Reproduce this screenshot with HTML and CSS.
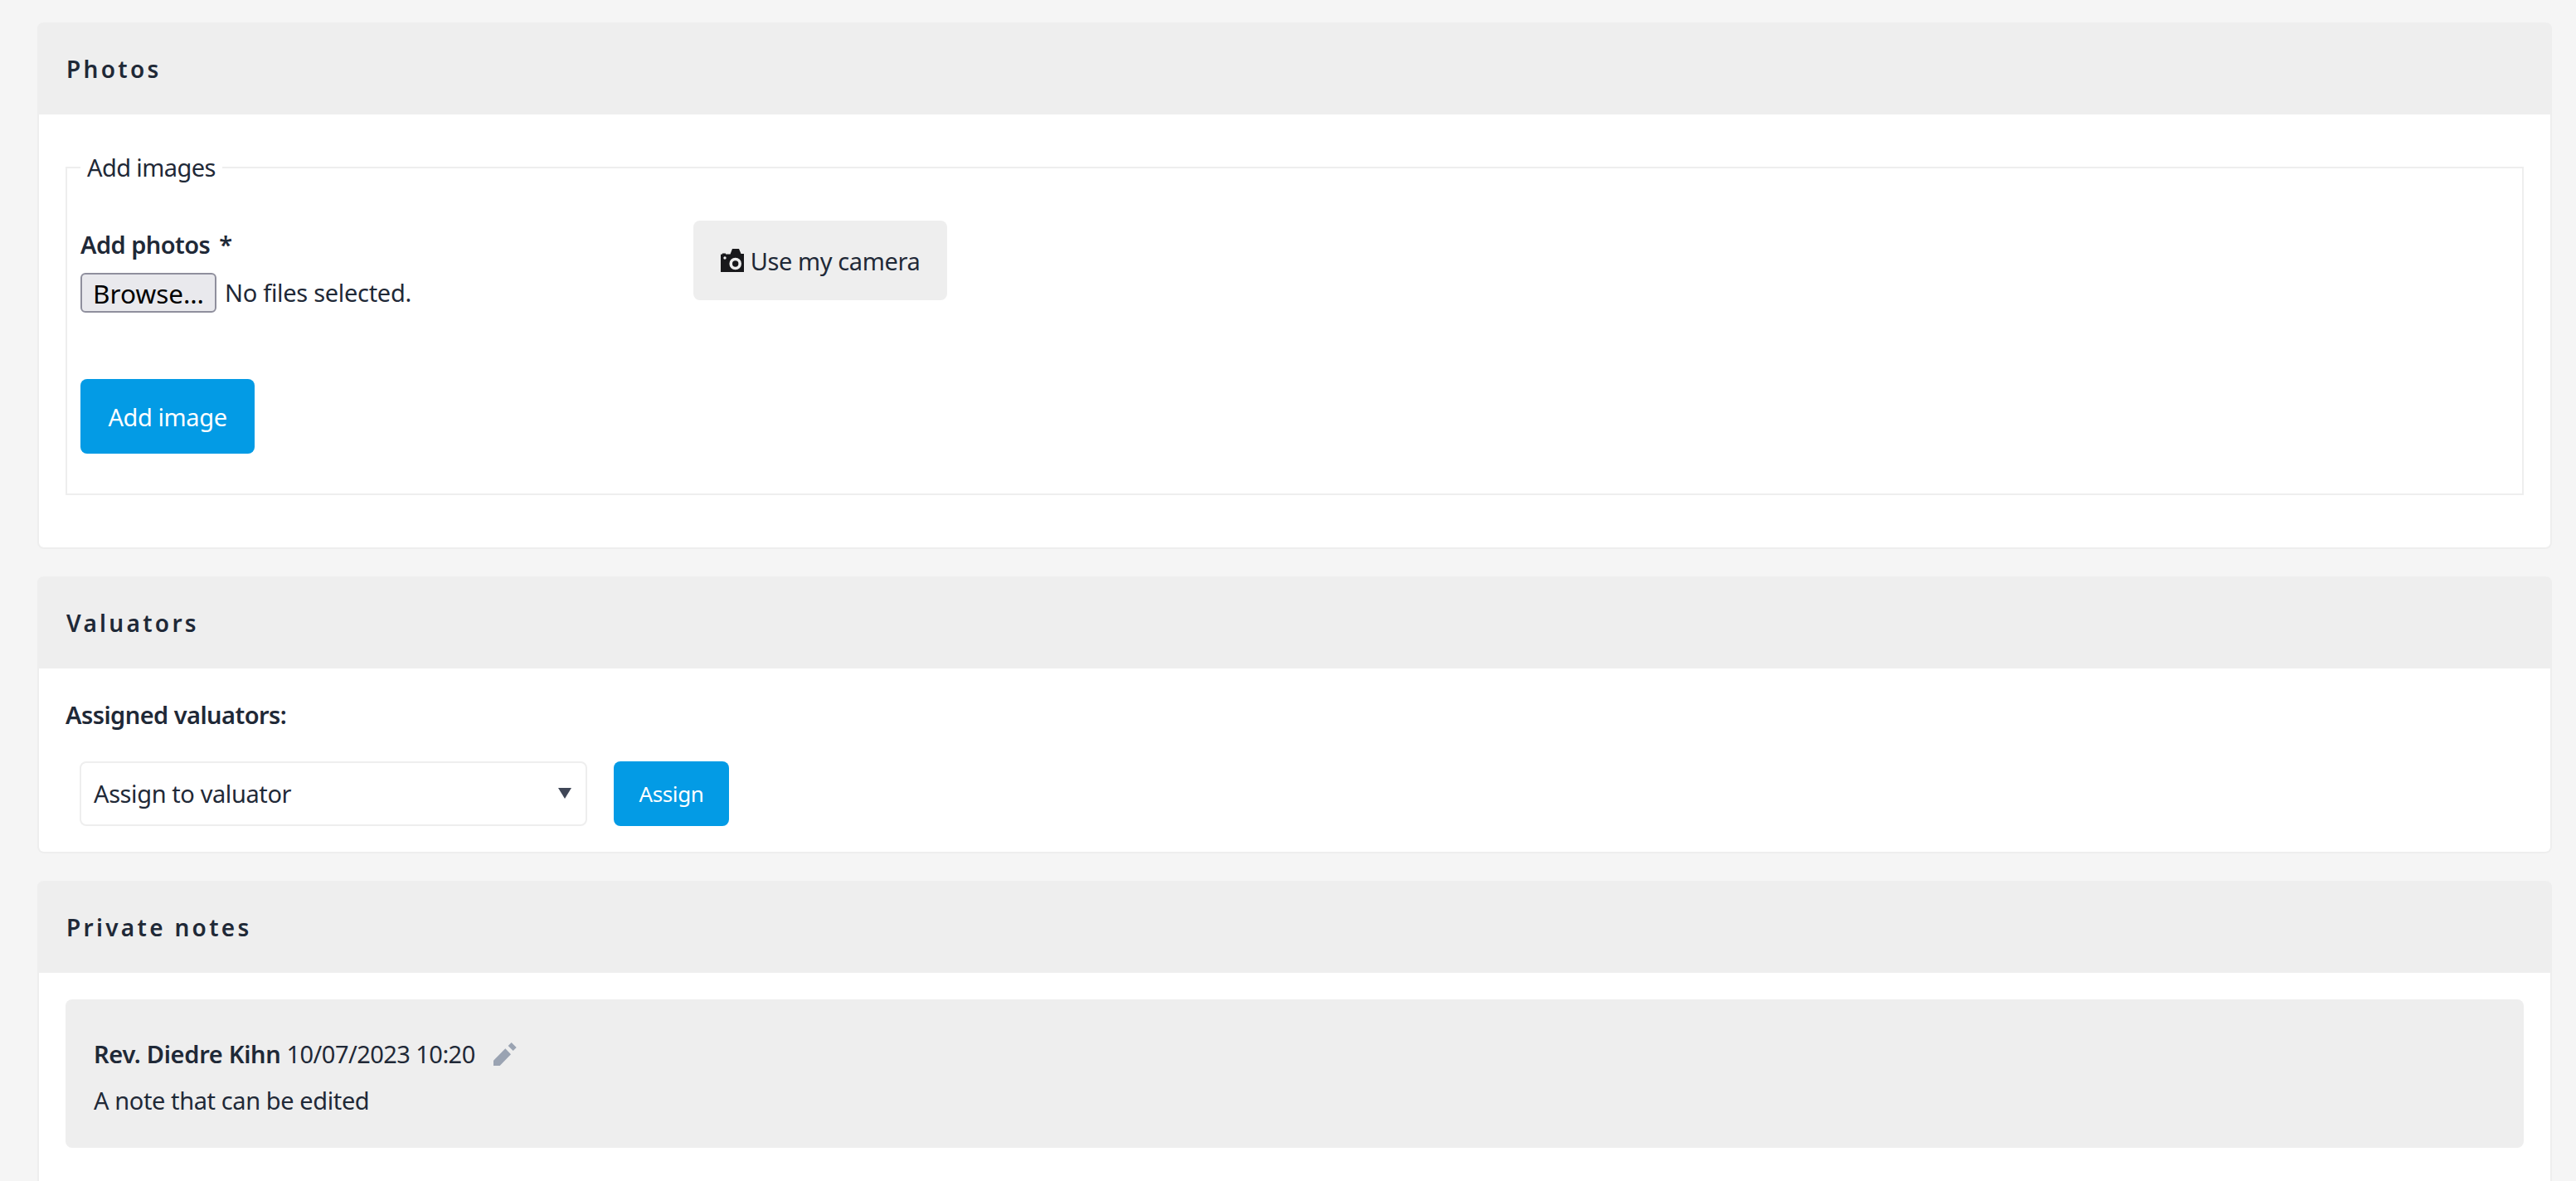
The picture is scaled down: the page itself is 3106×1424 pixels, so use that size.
FILE: index.html
```html
<!DOCTYPE html>
<html lang="en">
<head>
  <meta charset="UTF-8" />
  <title>Photos, valuators and notes</title>
  <link rel="stylesheet" href="styles.css">
</head>
<body>
  <section class="card card-photos">
    <h2 class="card-header">Photos</h2>
    <div class="card-body">
      <fieldset class="image-set">
        <legend>Add images</legend>
        <div class="upload-row">
          <div class="upload-field">
            <label class="field-label">Add photos <span class="required">*</span></label>
            <div class="file-input">
              <button class="browse-btn" type="button">Browse…</button>
              <span>No files selected.</span>
            </div>
          </div>
          <button class="camera-btn" type="button">
            <svg class="camera-icon" viewBox="0 0 28 28" aria-hidden="true">
              <path fill-rule="evenodd" d="M0 7.500 Q0 6.500 1 6.500 H2 V5.500 H6 V6.500 H11.500 L14 0 H22 L24.500 6 H28 V28 H0 Z M17.700 10.700 A7.300 7.300 0 1 0 17.700 25.300 A7.300 7.300 0 1 0 17.700 10.700 Z M5 9.300 A1.700 1.700 0 1 0 5 12.700 A1.700 1.700 0 1 0 5 9.300 Z"/>
              <circle cx="17.700" cy="18" r="3.700"/>
            </svg>
            Use my camera
          </button>
        </div>
        <button class="btn-primary add-image-btn" type="button">Add image</button>
      </fieldset>
    </div>
  </section>

  <section class="card">
    <h2 class="card-header">Valuators</h2>
    <div class="card-body card-body-valuators">
      <div class="field-label">Assigned valuators:</div>
      <div class="assign-row">
        <div class="select-box">Assign to valuator</div>
        <button class="btn-primary assign-btn" type="button">Assign</button>
      </div>
    </div>
  </section>

  <section class="card card-notes">
    <h2 class="card-header">Private notes</h2>
    <div class="card-body">
      <div class="note">
        <div class="note-meta">
          <strong>Rev. Diedre Kihn</strong>
          <span class="note-date">10/07/2023 10:20</span>
          <svg class="edit-icon" viewBox="0 0 28 28" aria-hidden="true">
            <path d="M0 21.700 L14.300 7.300 L21 14.300 L7.700 28 H0 Z"/>
            <path d="M17.700 4 L21.700 0 L27.700 6 L23.700 10 Z"/>
          </svg>
        </div>
        <div class="note-text">A note that can be edited</div>
      </div>
    </div>
  </section>
</body>
</html>
```

FILE: styles.css
```css
html, body {
  height: 100%;
}
body {
  margin: 0;
  padding: 27px 29px 0 45px;
  box-sizing: border-box;
  overflow: hidden;
  background: #f5f5f5;
  color: #1f2937;
  font-family: "Noto Sans", "Open Sans", sans-serif;
  font-size: 29px;
  line-height: 44px;
  letter-spacing: -0.4px;
}
button {
  font-family: inherit;
  letter-spacing: inherit;
  cursor: pointer;
}
.card {
  background: #fff;
  border: 2px solid #eee;
  border-top: none;
  border-radius: 8px;
  margin-bottom: 33px;
}
.card-header {
  margin: 0 -2px;
  height: 111px;
  padding: 0 35px;
  display: flex;
  align-items: center;
  background: #eee;
  border-radius: 8px 8px 0 0;
  font-size: 28px;
  font-weight: 600;
  letter-spacing: 3.3px;
}
.card-body {
  padding: 42px 32px 63px;
}
.image-set {
  margin: 0;
  padding: 0 16px;
  border: 2px solid #eee;
  height: 417px;
  box-sizing: border-box;
}
.image-set legend {
  padding: 0 8px;
  line-height: 44px;
  letter-spacing: -0.6px;
}
.upload-row {
  display: flex;
  align-items: flex-start;
}
.upload-field {
  width: 739px;
  padding-top: 49px;
}
.field-label {
  display: block;
  font-weight: 600;
  letter-spacing: -0.55px;
}
.required {
  margin-left: 4px;
}
.file-input {
  display: flex;
  align-items: center;
  gap: 10px;
  margin-top: 12px;
  letter-spacing: -0.3px;
}
.browse-btn {
  width: 164px;
  height: 48px;
  padding: 0;
  background: #e9e9ed;
  border: 2px solid #8f8f9d;
  border-radius: 6px;
  color: #000;
  font-size: 31.5px;
  letter-spacing: 0;
}
.camera-btn {
  margin-top: 42px;
  width: 306px;
  height: 96px;
  padding: 0;
  display: flex;
  align-items: center;
  justify-content: center;
  gap: 8px;
  background: #eee;
  border: none;
  border-radius: 8px;
  color: #1f2937;
  font-size: 29px;
}
.camera-icon {
  width: 28px;
  height: 28px;
  fill: #18181b;
}
.btn-primary {
  display: block;
  background: #039be5;
  border: none;
  border-radius: 8px;
  color: #fff;
  padding: 0;
}
.add-image-btn {
  margin-top: 80px;
  width: 210px;
  height: 90px;
  font-size: 29px;
}
.card-body-valuators {
  padding: 34px 32px 0;
  height: 221px;
  box-sizing: border-box;
}
.assign-row {
  display: flex;
  align-items: center;
  gap: 32px;
  margin: 34px 0 0 17px;
}
.select-box {
  width: 612px;
  height: 78px;
  box-sizing: border-box;
  padding: 0 15px;
  display: flex;
  align-items: center;
  position: relative;
  border: 2px solid #eee;
  border-radius: 8px;
}
.select-box::after {
  content: "";
  position: absolute;
  right: 17px;
  top: 30px;
  border-style: solid;
  border-width: 13px 8px 0;
  border-color: #3f4657 transparent transparent;
}
.assign-btn {
  width: 139px;
  height: 78px;
  font-size: 26px;
}
.card-notes {
  margin-bottom: 0;
}
.card-notes .card-body {
  padding: 32px 32px 64px;
}
.note {
  height: 179px;
  box-sizing: border-box;
  padding: 44px 34px 0;
  background: #eee;
  border-radius: 8px;
}
.note-meta {
  display: flex;
  align-items: center;
  gap: 7px;
}
.note-meta strong {
  font-weight: 600;
  letter-spacing: -0.3px;
}
.note-date {
  letter-spacing: -0.55px;
}
.edit-icon {
  width: 28px;
  height: 28px;
  margin-left: 15px;
  fill: #9aa3b2;
}
.note-text {
  margin-top: 12px;
}
```
